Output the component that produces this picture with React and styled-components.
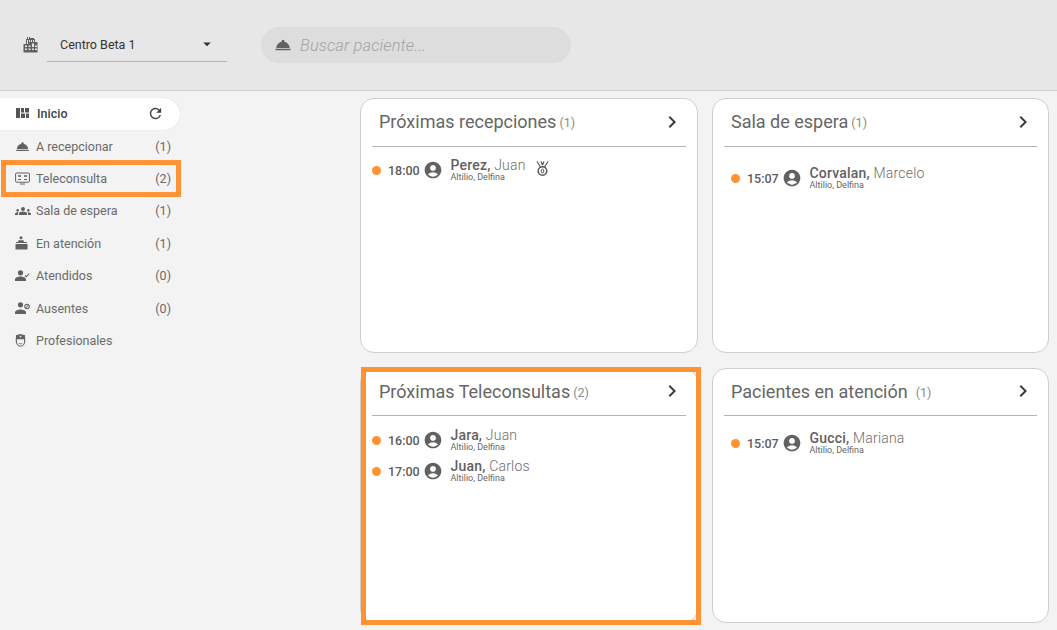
import React from "react";
import styled, { createGlobalStyle } from "styled-components";
import {
    MdRoomService,
    MdRefresh,
    MdChevronRight,
    MdAccountCircle,
    MdArrowDropDown,
    MdGroups,
} from "react-icons/md";

const GlobalStyle = createGlobalStyle`
    * { box-sizing: border-box; }
    html, body { margin: 0; height: 100%; }
    body {
        background: #f3f3f3;
        font-family: Roboto, "Liberation Sans", sans-serif;
        color: #616161;
        overflow: hidden;
    }
`;

const BuildingIcon = () => (
    <svg width="16" height="17" viewBox="0 0 16 17" fill="#616161">
        <path d="M3 3h1V1h1v2h1V1h1v1h4v1h1v3h2.500v10.500H.5V8H3V3zm1 1v4h1V4H4zm2 0v2h1V4H6zm2 0v2h1V4H8zm2 0v2h1V4h-1zM2 9.500v1.500h2V9.500H2zm0 3V14h2v-1.500H2zm3.500-3v1.500h2V9.500h-2zm0 3V14h2v-1.500h-2zm3.500-5V11h2V7.500H9zm0 5V14h2v-1.500H9zm3-3V11h2V9.500h-2zm0 3V14h2v-1.500h-2z" fillRule="evenodd" />
    </svg>
);

const DashIcon = () => (
    <svg width="13" height="10" viewBox="0 0 13 10" fill="#555">
        <path d="M0 0h4v10H0zM5 0h3v4.500H5zM9 0h4v4.500H9zM5 5.500h4V10H5zM10 5.500h3V10h-3z" />
    </svg>
);

const ScreenIcon = () => (
    <svg width="15" height="13" viewBox="0 0 15 13" fill="none" stroke="#616161">
        <rect x="0.600" y="1" width="13.800" height="9.200" rx="1" strokeWidth="1" />
        <path d="M5 12h5" strokeWidth="1" />
        <path d="M3 4h3M9 4h3" strokeWidth="1.600" />
        <path d="M3 7.500h3M9 7.500h3" strokeWidth="1" />
    </svg>
);

const DeskIcon = () => (
    <svg width="13" height="14" viewBox="0 0 13 14" fill="#616161">
        <circle cx="6" cy="1.800" r="1.500" />
        <path d="M3.500 4.200h5l.5 1.800h3v1H1V6h2z" />
        <path d="M0.500 8h12v5.500H.5z" />
    </svg>
);

const PersonCheckIcon = () => (
    <svg width="15" height="11" viewBox="0 0 15 11" fill="#616161">
        <circle cx="5.500" cy="2.800" r="2.600" />
        <path d="M0 11V9.500C0 7.500 3 6.500 5.500 6.500S11 7.500 11 9.500V11z" />
        <path d="M10 5.500l1.300 1.300L14.300 3.500" fill="none" stroke="#616161" strokeWidth="1.100" />
    </svg>
);

const PersonBanIcon = () => (
    <svg width="15" height="12" viewBox="0 0 15 12" fill="#616161">
        <circle cx="5.500" cy="2.800" r="2.600" />
        <path d="M0 12v-1.500C0 8.500 3 7.500 5.500 7.500S11 8.500 11 10.500V12z" />
        <circle cx="12" cy="4.500" r="2.200" fill="none" stroke="#616161" strokeWidth="1.100" />
        <path d="M10.500 6l3-3" stroke="#616161" strokeWidth="1" />
    </svg>
);

const NurseIcon = () => (
    <svg width="11" height="13" viewBox="0 0 11 13" fill="none" stroke="#616161" strokeWidth="1.100">
        <path d="M1.500 4.600V1.700L5.500.600l4 1.100v2.900z" fill="#616161" />
        <path d="M1.300 4.600v2.400c0 3 1.900 5.300 4.200 5.300s4.200-2.300 4.200-5.300V4.600" />
        <path d="M3.800 9.200c1 .8 2.400.8 3.400 0" strokeWidth="0.900" />
        <path d="M5.500 1.600v2M4.500 2.600h2" stroke="#f3f3f3" strokeWidth="0.700" />
    </svg>
);

const MedalIcon = () => (
    <svg width="13" height="16" viewBox="0 0 13 16" fill="none" stroke="#555" strokeWidth="1.200">
        <path d="M1 .500l3.500 5.500M5 .500l1.500 3.500M8 .500L6.500 4M12 .500L8.500 6" />
        <circle cx="6.500" cy="10" r="4.300" strokeWidth="1.500" />
        <ellipse cx="6.500" cy="10" rx="1.300" ry="2" strokeWidth="1" />
    </svg>
);

const menu = [
    { label: "A recepcionar", count: 1, icon: <MdRoomService size={15} /> },
    { label: "Teleconsulta", count: 2, icon: <ScreenIcon />, marked: true },
    { label: "Sala de espera", count: 1, icon: <MdGroups size={16} /> },
    { label: "En atención", count: 1, icon: <DeskIcon /> },
    { label: "Atendidos", count: 0, icon: <PersonCheckIcon /> },
    { label: "Ausentes", count: 0, icon: <PersonBanIcon /> },
    { label: "Profesionales", icon: <NurseIcon /> },
];

const cards = [
    {
        title: "Próximas recepciones",
        count: 1,
        listTop: 11,
        patients: [{ time: "18:00", last: "Perez,", first: "Juan", medal: true }],
    },
    {
        title: "Sala de espera",
        count: 1,
        listTop: 19,
        indent: 7,
        patients: [{ time: "15:07", last: "Corvalan,", first: "Marcelo" }],
    },
    {
        title: "Próximas Teleconsultas",
        count: 2,
        listTop: 12,
        headHeight: 47,
        marked: true,
        patients: [
            { time: "16:00", last: "Jara,", first: "Juan" },
            { time: "17:00", last: "Juan,", first: "Carlos" },
        ],
    },
    {
        title: "Pacientes en atención",
        count: 1,
        listTop: 15,
        headHeight: 47,
        countGap: 8,
        indent: 7,
        patients: [{ time: "15:07", last: "Gucci,", first: "Mariana" }],
    },
];

const App = () => {
    return (
        <Page>
            <GlobalStyle />
            <Header>
                <CenterIcon><BuildingIcon /></CenterIcon>
                <CenterSelect>
                    Centro Beta 1
                    <MdArrowDropDown size={18} />
                </CenterSelect>
                <Search>
                    <MdRoomService size={18} />
                    <span>Buscar paciente...</span>
                </Search>
            </Header>
            <Body>
                <Sidebar>
                    <HomeItem>
                        <DashIcon />
                        <HomeLabel>Inicio</HomeLabel>
                        <MdRefresh size={17} color="#444" />
                    </HomeItem>
                    {menu.map((item) => (
                        <MenuItem key={item.label} $marked={item.marked}>
                            <MenuIcon>{item.icon}</MenuIcon>
                            <MenuLabel>{item.label}</MenuLabel>
                            {item.count !== undefined && <span>({item.count})</span>}
                        </MenuItem>
                    ))}
                </Sidebar>
                <Board>
                    {cards.map((card) => (
                        <Card key={card.title}>
                            <CardHead $height={card.headHeight}>
                                <CardTitle>{card.title}</CardTitle>
                                <CardCount $gap={card.countGap}>({card.count})</CardCount>
                                <MdChevronRight size={24} color="#3c3c3c" />
                            </CardHead>
                            <PatientList $top={card.listTop} $indent={card.indent}>
                                {card.patients.map((p) => (
                                    <Patient key={p.time}>
                                        <Dot />
                                        <Time>{p.time}</Time>
                                        <MdAccountCircle size={20} color="#616161" />
                                        <Names>
                                            <FullName>
                                                <b>{p.last}</b> {p.first}
                                                {p.medal && <MedalWrap><MedalIcon /></MedalWrap>}
                                            </FullName>
                                            <Doctor>Altilio, Delfina</Doctor>
                                        </Names>
                                    </Patient>
                                ))}
                            </PatientList>
                            {card.marked && <CardMark />}
                        </Card>
                    ))}
                </Board>
            </Body>
        </Page>
    );
};

const Page = styled.div`
    height: 630px;
    overflow: hidden;
`;

const Header = styled.header`
    height: 91px;
    background: #e7e7e7;
    border-bottom: 1px solid #d2d2d2;
    display: flex;
    align-items: center;
    padding: 0 0 4px 23px;
`;

const CenterIcon = styled.div`
    display: flex;
    width: 24px;
    margin-top: 2px;
`;

const CenterSelect = styled.div`
    width: 180px;
    height: 32px;
    margin-top: 6px;
    padding: 0 11px 3px 13px;
    display: flex;
    align-items: center;
    justify-content: space-between;
    border-bottom: 1px solid #b3b3b3;
    font-size: 12.5px;
    color: #333;
`;

const Search = styled.div`
    width: 310px;
    height: 36px;
    margin-left: 34px;
    margin-top: 4px;
    padding-left: 13px;
    display: flex;
    align-items: center;
    gap: 8px;
    border-radius: 18px;
    background: #dddddd;
    color: #616161;

    span {
        font-size: 16.500px;
        font-style: italic;
        font-weight: 300;
        letter-spacing: 0.1px;
        color: #a3a3a3;
    }
`;

const Body = styled.div`
    display: grid;
    grid-template-columns: 180px 1fr;
    column-gap: 180px;
    padding-right: 8px;
`;

const Sidebar = styled.nav`
    padding-top: 7px;
    font-size: 12.5px;
    color: #6a6a6a;
`;

const HomeItem = styled.div`
    height: 32px;
    padding: 0 16px 2px;
    display: flex;
    align-items: center;
    background: #fff;
    border-radius: 0 16px 16px 0;
    box-shadow: 0 0 1px rgba(0, 0, 0, 0.2);
    color: #444;
    font-weight: 500;
`;

const HomeLabel = styled.span`
    flex: 1;
    margin-left: 8px;
`;

const MenuItem = styled.div`
    position: relative;
    height: 32.4px;
    padding: 0 9px 0 15px;
    display: flex;
    align-items: center;

    ${(p) =>
        p.$marked &&
        `&::after {
            content: "";
            position: absolute;
            inset: -2px -1px -2px 1px;
            border: 5px solid #ff9232;
        }`}
`;

const MenuIcon = styled.span`
    width: 21px;
    display: flex;
    justify-content: flex-start;
    color: #616161;
`;

const MenuLabel = styled.span`
    flex: 1;
`;

const Board = styled.main`
    padding-top: 7px;
    display: grid;
    grid-template-columns: 338px 337px;
    grid-auto-rows: 255px;
    gap: 15px 14px;
`;

const Card = styled.section`
    position: relative;
    background: #fff;
    border: 1px solid #cfcfcf;
    border-radius: 14px;
    padding: 0 11px;
`;

const CardHead = styled.div`
    height: ${(p) => p.$height || 48}px;
    display: flex;
    align-items: center;
    padding: 0 0 2px 7px;
    border-bottom: 1px solid #b4b4b4;

    svg {
        margin-left: auto;
        margin-right: 2px;
    }
`;

const CardTitle = styled.h3`
    margin: 0;
    font-size: 18px;
    font-weight: 400;
    color: #666;
`;

const CardCount = styled.span`
    margin-left: ${(p) => p.$gap || 3}px;
    margin-top: 2px;
    font-size: 12.5px;
    color: #8a8a8a;
`;

const PatientList = styled.div`
    padding-top: ${(p) => p.$top}px;
    padding-left: ${(p) => p.$indent || 0}px;
    display: flex;
    flex-direction: column;
    gap: 7px;
`;

const Patient = styled.div`
    display: flex;
    align-items: center;
    height: 24px;
`;

const Dot = styled.span`
    width: 9px;
    height: 9px;
    border-radius: 50%;
    background: #ff9232;
    margin-right: 7px;
`;

const Time = styled.span`
    width: 35px;
    font-size: 12.5px;
    font-weight: 500;
    color: #5c5c5c;
`;

const Names = styled.div`
    margin-left: 7.500px;
    margin-top: -1px;
`;

const FullName = styled.div`
    position: relative;
    font-size: 14px;
    line-height: 15px;
    font-weight: 300;
    color: #6e6e6e;
    letter-spacing: 0.2px;

    b {
        font-weight: 500;
        color: #616161;
    }
`;

const MedalWrap = styled.span`
    position: absolute;
    left: 85px;
    top: 3px;
`;

const Doctor = styled.div`
    font-size: 9px;
    line-height: 9px;
    color: #666;
`;

const CardMark = styled.div`
    position: absolute;
    inset: -2px -3.500px -2.500px 0;
    border: 5px solid #ff9232;
    pointer-events: none;
`;

export default App;
